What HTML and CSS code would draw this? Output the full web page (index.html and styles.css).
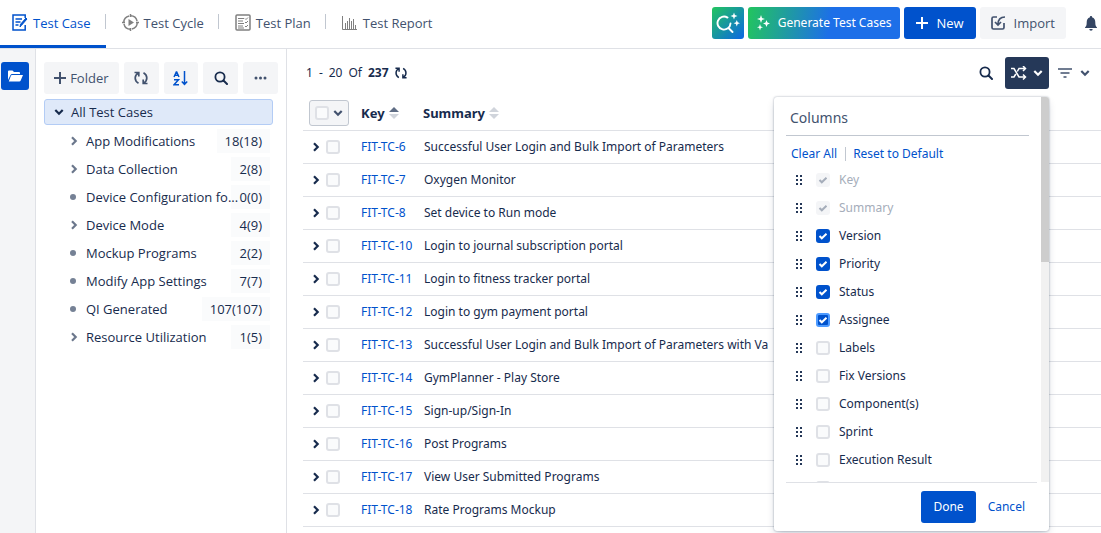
FILE: index.html
```html
<!DOCTYPE html>
<html lang="en">
<head>
    <meta charset="UTF-8">
    <meta name="viewport" content="width=device-width, initial-scale=1.0">
    <title>Test Case</title>
    <link rel="stylesheet" href="styles.css">
</head>
<body>
    <!-- Shared icons -->
    <svg class="sprite" aria-hidden="true">
        <symbol id="i-chevron" viewBox="0 0 10 10"><path d="M1.300 3l3.700 3.700L8.700 3" fill="none" stroke="currentColor" stroke-width="2.200"/></symbol>
        <symbol id="i-right" viewBox="0 0 10 10"><path d="M3 1.300L6.700 5 3 8.700" fill="none" stroke="currentColor" stroke-width="2.200"/></symbol>
        <symbol id="i-plus" viewBox="0 0 12 12"><path d="M6 0v12M0 6h12" stroke="currentColor" stroke-width="2"/></symbol>
        <symbol id="i-search" viewBox="0 0 14 14"><circle cx="6" cy="6" r="4.600" fill="none" stroke="currentColor" stroke-width="1.800"/><path d="M9.500 9.500L13 13" stroke="currentColor" stroke-width="2" stroke-linecap="round"/></symbol>
        <symbol id="i-refresh" viewBox="0 0 14 14"><path d="M4.500 12.300C2.300 11 1.200 9.200 1.200 7S2.300 3 4.500 1.900M.5 1.500h4.300v4M9.500 1.700c2.200 1.300 3.300 3.100 3.300 5.300s-1.100 4-3.300 5.100M13.500 12.500H9.200v-4" fill="none" stroke="currentColor" stroke-width="1.700"/></symbol>
        <symbol id="i-sort" viewBox="0 0 10 12"><path class="sort-up" d="M5 0l5 5H0z"/><path class="sort-down" d="M0 7h10l-5 5z"/></symbol>
        <symbol id="i-drag" viewBox="0 0 7 10"><path d="M0 0h2v2H0zM4 0h2v2H4zM0 4h2v2H0zM4 4h2v2H4zM0 8h2v2H0zM4 8h2v2H4z" fill="currentColor"/></symbol>
    </svg>

    <header class="topbar">
        <nav class="tabs">
            <a href="#" class="tab active">
                <svg width="16" height="17" viewBox="0 0 16 17" fill="none" stroke="currentColor" stroke-width="1.500"><path d="M13.200 4V1H1v15h12.200v-5M3.500 5h6.500M3.500 8h5M3.500 11h3"/><path d="M15 5l-5.500 6.300L8 13l.5-2.700L14 4z" fill="currentColor" stroke-width="1"/></svg>
                Test Case
            </a>
            <a href="#" class="tab">
                <svg class="grey" width="17" height="17" viewBox="0 0 17 17" fill="none" stroke="currentColor"><circle cx="8.500" cy="8.500" r="6.700" stroke-width="1.500" stroke-dasharray="9 1.500"/><path d="M8.500 0v3M8.500 14v3M0 8.500h3M14 8.500h3" stroke-width="1.500"/><path d="M6.500 5l5.500 3.500L6.500 12z" fill="currentColor" stroke="none"/></svg>
                Test Cycle
            </a>
            <a href="#" class="tab">
                <svg class="grey" width="16" height="17" viewBox="0 0 16 17" fill="none" stroke="currentColor"><rect x="1" y="1" width="14" height="15" rx="1" stroke-width="1.500"/><path d="M3 4.500h6M3 7h5M3 9.500h6M3 12h5M3 14h6M10 4.500l1 1 2-2M10 8l1 1 2-2M10 12l1 1 2-2" stroke-width="1"/></svg>
                Test Plan
            </a>
            <a href="#" class="tab">
                <svg class="grey" width="16" height="14" viewBox="0 0 16 14" fill="none" stroke="currentColor"><path d="M.5 0v13.500H15" stroke-width="1"/><path d="M3.500 13V7M5.500 13V5M7.500 13V2M9.500 13V5M11.500 13V3M13.500 13V9" stroke-width="1"/></svg>
                Test Report
            </a>
        </nav>
        <div class="actions">
            <button class="btn ai-search" aria-label="AI search">
                <svg width="24" height="22" viewBox="0 0 24 22" fill="none" stroke="#fff" stroke-width="1.900"><path d="M11.500 5.600A6.500 6.500 0 1 0 14.500 11.500M12.500 16l4 4" stroke-linecap="round"/><path d="M18 .5l.9 2.600 2.600.9-2.600.9L18 7.500l-.9-2.600-2.600-.9 2.600-.9zM20.800 8l.9 2.300 2.300.9-2.300.9-.9 2.300-.9-2.300-2.300-.9 2.300-.9z" fill="#fff" stroke="none"/></svg>
            </button>
            <button class="btn generate">
                <svg width="14" height="16" viewBox="0 0 14 16" fill="#fff"><path d="M5 0l1 3 3 1-3 1-1 3-1-3-3-1 3-1zM10.500 5l1 2.500L14 8.500l-2.500 1-1 2.500-1-2.500L7 8.500l2.500-1zM4 9l.8 2.400L7 12.200l-2.200.8L4 15.500 3.200 13 1 12.200l2.200-.8z"/></svg>
                Generate Test Cases
            </button>
            <button class="btn new"><svg width="12" height="12"><use href="#i-plus"/></svg>New</button>
            <button class="btn import">
                <svg width="15" height="14" viewBox="0 0 15 14" fill="none" stroke="currentColor" stroke-width="1.700"><path d="M6 1H2.500Q1 1 1 2.500v9Q1 13 2.500 13h9q1.500 0 1.500-1.500V7"/><path d="M14 1Q7 1 7 8.500M4 6l3 3 3-3"/></svg>
                Import
            </button>
            <button class="icon-btn bell" aria-label="Notifications">
                <svg width="12" height="15" viewBox="0 0 12 15" fill="currentColor"><path d="M6 0a1 1 0 0 1 1 1.300C9.500 2 10.300 4 10.300 6.500c0 3 .4 3.500 1.700 5V12H0v-.5c1.300-1.500 1.700-2 1.700-5C1.700 4 2.500 2 5 1.300A1 1 0 0 1 6 0zM4.300 13h3.400a1.700 1.700 0 0 1-3.400 0z"/></svg>
            </button>
        </div>
    </header>

    <div class="layout">
        <aside class="rail">
            <button class="rail-btn" aria-label="Folders">
                <svg width="15" height="12" viewBox="0 0 15 12" fill="#fff"><path d="M0 10V1.500Q0 .5 1 .5h3.500L6 2h5q1 0 1 1v1H4Q3 4 2.500 5z"/><path d="M4 5h11l-2.300 5.500q-.4 1-1.400 1H.8L3 5.600Q3.300 5 4 5z"/></svg>
            </button>
        </aside>

        <section class="sidebar">
            <div class="folder-tools">
                <button class="tool tool-folder"><svg width="12" height="12"><use href="#i-plus"/></svg>Folder</button>
                <button class="tool" aria-label="Refresh"><svg width="14" height="14"><use href="#i-refresh"/></svg></button>
                <button class="tool sort" aria-label="Sort">
                    <svg width="16" height="15" viewBox="0 0 16 15" fill="none" stroke="currentColor" stroke-width="1.500"><path d="M1 6l2.300-5h.4L6 6M2 4.300h3M1 8.700h4.500L1 13.800h5M11.500 0v13M8.800 10.500l2.700 3 2.700-3"/></svg>
                </button>
                <button class="tool dark" aria-label="Search folders"><svg width="14" height="14"><use href="#i-search"/></svg></button>
                <button class="tool" aria-label="More">
                    <svg width="13" height="4" viewBox="0 0 13 4" fill="currentColor"><circle cx="2" cy="2" r="1.500"/><circle cx="6.500" cy="2" r="1.500"/><circle cx="11" cy="2" r="1.500"/></svg>
                </button>
            </div>
            <a href="#" class="tree-root"><svg width="10" height="10"><use href="#i-chevron"/></svg>All Test Cases</a>
            <ul class="tree">
                <li><svg width="10" height="10"><use href="#i-right"/></svg><a href="#">App Modifications</a><span class="count">18(18)</span></li>
                <li><svg width="10" height="10"><use href="#i-right"/></svg><a href="#">Data Collection</a><span class="count">2(8)</span></li>
                <li><i class="dot"></i><a href="#">Device Configuration fo...</a><span class="count">0(0)</span></li>
                <li><svg width="10" height="10"><use href="#i-right"/></svg><a href="#">Device Mode</a><span class="count">4(9)</span></li>
                <li><i class="dot"></i><a href="#">Mockup Programs</a><span class="count">2(2)</span></li>
                <li><i class="dot"></i><a href="#">Modify App Settings</a><span class="count">7(7)</span></li>
                <li><i class="dot"></i><a href="#">QI Generated</a><span class="count">107(107)</span></li>
                <li><svg width="10" height="10"><use href="#i-right"/></svg><a href="#">Resource Utilization</a><span class="count">1(5)</span></li>
            </ul>
        </section>

        <main class="content">
            <div class="list-bar">
                <div class="pager">
                    <span>1</span><span>-</span><span>20</span><span>Of</span><b>237</b>
                    <button class="icon-btn" aria-label="Refresh list"><svg width="12" height="12"><use href="#i-refresh"/></svg></button>
                </div>
                <div class="list-tools">
                    <button class="icon-btn" aria-label="Search"><svg width="14" height="14"><use href="#i-search"/></svg></button>
                    <div class="columns-menu">
                        <button class="columns-btn" aria-label="Columns">
                            <svg width="16" height="14" viewBox="0 0 16 14" fill="none" stroke="currentColor" stroke-width="1.500"><path d="M0 2.500h3L8 11h6M0 11h3l1.800-3M6.300 5.500L8 2.500h6M12 0l2.500 2.500L12 5M12 8.500l2.500 2.500-2.500 2.500"/></svg>
                            <svg width="10" height="10"><use href="#i-chevron"/></svg>
                        </button>
                        <div class="popup">
                            <div class="popup-body">
                                <div class="popup-scroll">
                                    <h2>Columns</h2>
                                    <div class="popup-links"><a href="#">Clear All</a><a href="#">Reset to Default</a></div>
                                    <ul class="column-list">
                                        <li><svg width="7" height="10"><use href="#i-drag"/></svg><label><input type="checkbox" checked disabled>Key</label></li>
                                        <li><svg width="7" height="10"><use href="#i-drag"/></svg><label><input type="checkbox" checked disabled>Summary</label></li>
                                        <li><svg width="7" height="10"><use href="#i-drag"/></svg><label><input type="checkbox" checked>Version</label></li>
                                        <li><svg width="7" height="10"><use href="#i-drag"/></svg><label><input type="checkbox" checked>Priority</label></li>
                                        <li><svg width="7" height="10"><use href="#i-drag"/></svg><label><input type="checkbox" checked>Status</label></li>
                                        <li><svg width="7" height="10"><use href="#i-drag"/></svg><label><input type="checkbox" class="focused" checked>Assignee</label></li>
                                        <li><svg width="7" height="10"><use href="#i-drag"/></svg><label><input type="checkbox">Labels</label></li>
                                        <li><svg width="7" height="10"><use href="#i-drag"/></svg><label><input type="checkbox">Fix Versions</label></li>
                                        <li><svg width="7" height="10"><use href="#i-drag"/></svg><label><input type="checkbox">Component(s)</label></li>
                                        <li><svg width="7" height="10"><use href="#i-drag"/></svg><label><input type="checkbox">Sprint</label></li>
                                        <li><svg width="7" height="10"><use href="#i-drag"/></svg><label><input type="checkbox">Execution Result</label></li>
                                        <li><svg width="7" height="10"><use href="#i-drag"/></svg><label><input type="checkbox" aria-label="Column"></label></li>
                                    </ul>
                                </div>
                                <div class="scrollbar"><div class="thumb"></div></div>
                            </div>
                            <div class="popup-footer">
                                <button class="done">Done</button>
                                <button class="cancel">Cancel</button>
                            </div>
                        </div>
                    </div>
                    <button class="icon-btn filter" aria-label="Filter">
                        <svg width="14" height="10" viewBox="0 0 14 10" stroke="currentColor" stroke-width="1.700"><path d="M0 1h14M2.500 5h9M5.500 9h3"/></svg>
                        <svg width="10" height="10"><use href="#i-chevron"/></svg>
                    </button>
                </div>
            </div>

            <table class="cases">
                <thead>
                    <tr>
                        <th class="col-select"><div class="select-all"><input type="checkbox" aria-label="Select all"><svg width="10" height="10"><use href="#i-chevron"/></svg></div></th>
                        <th class="col-key"><span class="sorted">Key<svg width="10" height="12"><use href="#i-sort"/></svg></span></th>
                        <th><span>Summary<svg width="10" height="12"><use href="#i-sort"/></svg></span></th>
                    </tr>
                </thead>
                <tbody>
                    <tr><td><div class="row-tools"><svg width="10" height="10"><use href="#i-right"/></svg><input type="checkbox" aria-label="FIT-TC-6"></div></td><td><a href="#">FIT-TC-6</a></td><td>Successful User Login and Bulk Import of Parameters</td></tr>
                    <tr><td><div class="row-tools"><svg width="10" height="10"><use href="#i-right"/></svg><input type="checkbox" aria-label="FIT-TC-7"></div></td><td><a href="#">FIT-TC-7</a></td><td>Oxygen Monitor</td></tr>
                    <tr><td><div class="row-tools"><svg width="10" height="10"><use href="#i-right"/></svg><input type="checkbox" aria-label="FIT-TC-8"></div></td><td><a href="#">FIT-TC-8</a></td><td>Set device to Run mode</td></tr>
                    <tr><td><div class="row-tools"><svg width="10" height="10"><use href="#i-right"/></svg><input type="checkbox" aria-label="FIT-TC-10"></div></td><td><a href="#">FIT-TC-10</a></td><td>Login to journal subscription portal</td></tr>
                    <tr><td><div class="row-tools"><svg width="10" height="10"><use href="#i-right"/></svg><input type="checkbox" aria-label="FIT-TC-11"></div></td><td><a href="#">FIT-TC-11</a></td><td>Login to fitness tracker portal</td></tr>
                    <tr><td><div class="row-tools"><svg width="10" height="10"><use href="#i-right"/></svg><input type="checkbox" aria-label="FIT-TC-12"></div></td><td><a href="#">FIT-TC-12</a></td><td>Login to gym payment portal</td></tr>
                    <tr><td><div class="row-tools"><svg width="10" height="10"><use href="#i-right"/></svg><input type="checkbox" aria-label="FIT-TC-13"></div></td><td><a href="#">FIT-TC-13</a></td><td>Successful User Login and Bulk Import of Parameters with Va</td></tr>
                    <tr><td><div class="row-tools"><svg width="10" height="10"><use href="#i-right"/></svg><input type="checkbox" aria-label="FIT-TC-14"></div></td><td><a href="#">FIT-TC-14</a></td><td>GymPlanner - Play Store</td></tr>
                    <tr><td><div class="row-tools"><svg width="10" height="10"><use href="#i-right"/></svg><input type="checkbox" aria-label="FIT-TC-15"></div></td><td><a href="#">FIT-TC-15</a></td><td>Sign-up/Sign-In</td></tr>
                    <tr><td><div class="row-tools"><svg width="10" height="10"><use href="#i-right"/></svg><input type="checkbox" aria-label="FIT-TC-16"></div></td><td><a href="#">FIT-TC-16</a></td><td>Post Programs</td></tr>
                    <tr><td><div class="row-tools"><svg width="10" height="10"><use href="#i-right"/></svg><input type="checkbox" aria-label="FIT-TC-17"></div></td><td><a href="#">FIT-TC-17</a></td><td>View User Submitted Programs</td></tr>
                    <tr><td><div class="row-tools"><svg width="10" height="10"><use href="#i-right"/></svg><input type="checkbox" aria-label="FIT-TC-18"></div></td><td><a href="#">FIT-TC-18</a></td><td>Rate Programs Mockup</td></tr>
                </tbody>
            </table>
        </main>
    </div>
</body>
</html>
```
FILE: styles.css
```css
* {
    margin: 0;
    padding: 0;
    box-sizing: border-box;
}

body {
    font-family: "Open Sans", "Noto Sans", sans-serif;
    font-size: 13px;
    line-height: 20px;
    color: #172b4d;
    background: #fff;
    height: 100vh;
    display: flex;
    flex-direction: column;
    overflow: hidden;
}

a {
    color: #0052cc;
    text-decoration: none;
}

button {
    font: inherit;
    color: inherit;
    border: none;
    background: none;
    cursor: pointer;
}

svg {
    display: block;
    flex-shrink: 0;
}

ul {
    list-style: none;
}

.sprite {
    position: absolute;
    width: 0;
    height: 0;
}

/* Checkboxes */
input[type="checkbox"] {
    appearance: none;
    width: 14px;
    height: 14px;
    flex-shrink: 0;
    border: 2px solid #dfe1e6;
    border-radius: 3px;
    background: #fafbfc;
}

input[type="checkbox"]:checked {
    border-color: #0052cc;
    background: #0052cc url("data:image/svg+xml,%3Csvg xmlns='http://www.w3.org/2000/svg' viewBox='0 0 10 10'%3E%3Cpath d='M1.500 5l2.300 2.300L8.500 2.800' fill='none' stroke='white' stroke-width='2'/%3E%3C/svg%3E") center / 10px no-repeat;
}

input[type="checkbox"].focused {
    border-color: #4c9aff;
}

input[type="checkbox"]:disabled {
    border-color: #f4f5f7;
    background: #f4f5f7 url("data:image/svg+xml,%3Csvg xmlns='http://www.w3.org/2000/svg' viewBox='0 0 10 10'%3E%3Cpath d='M1.500 5l2.300 2.300L8.500 2.800' fill='none' stroke='%23a5adba' stroke-width='2'/%3E%3C/svg%3E") center / 10px no-repeat;
}

/* Top bar */
.topbar {
    display: flex;
    justify-content: space-between;
    height: 49px;
    flex-shrink: 0;
    border-bottom: 1px solid #dfe1e6;
}

.tabs {
    display: flex;
}

.tab {
    display: flex;
    align-items: center;
    gap: 5px;
    padding: 0 15px 0 16px;
    color: #42526e;
    border-bottom: 3px solid transparent;
    background: linear-gradient(#c1c7d0, #c1c7d0) right 14px / 1px 15px no-repeat;
}

.tab:first-child {
    padding-left: 12px;
}

.tab:last-child {
    background: none;
}

.tab.active {
    color: #0052cc;
    border-bottom-color: #0052cc;
}

.grey {
    color: #808080;
}

.actions {
    display: flex;
    align-items: center;
    gap: 4px;
    padding: 0 4px 2px 0;
}

.btn {
    display: flex;
    align-items: center;
    height: 32px;
    padding: 0 12px;
    border-radius: 3px;
    color: #fff;
}

.ai-search {
    justify-content: center;
    width: 32px;
    padding: 0;
    background: linear-gradient(135deg, #22c55e, #0c66e4);
}

.generate {
    gap: 8px;
    padding: 0 9px 0 8px;
    background: linear-gradient(100deg, #22c55e, #1d6fe8 54%);
    font-family: "Noto Sans", sans-serif;
    font-size: 12px;
}

.new {
    gap: 8px;
    background: #0052cc;
}

.import {
    gap: 8px;
    padding: 0 11px;
    background: #f4f5f7;
    color: #42526e;
}

.icon-btn {
    display: flex;
    align-items: center;
}

.bell {
    padding-left: 15px;
    color: #344563;
}

/* Page areas */
.layout {
    display: flex;
    flex: 1;
    min-height: 0;
}

.rail {
    width: 36px;
    flex-shrink: 0;
    padding: 13px 1px;
    background: #f4f5f7;
    border-right: 1px solid #dfe1e6;
}

.rail-btn {
    display: flex;
    align-items: center;
    justify-content: center;
    width: 28px;
    height: 28px;
    border-radius: 3px;
    background: #0052cc;
}

.sidebar {
    width: 251px;
    flex-shrink: 0;
    padding: 13px 8px;
    border-right: 1px solid #dfe1e6;
}

.folder-tools {
    display: flex;
    gap: 5px;
    margin-bottom: 5px;
}

.tool {
    display: flex;
    align-items: center;
    justify-content: center;
    gap: 4px;
    width: 35px;
    height: 32px;
    border-radius: 3px;
    background: #f4f5f7;
    color: #42526e;
}

.tool-folder {
    width: 75px;
}

.sort {
    color: #0052cc;
}

.dark {
    color: #172b4d;
}

.tree-root {
    display: flex;
    align-items: center;
    gap: 7px;
    height: 26px;
    margin: 0 5px 4px 0;
    padding: 0 9px;
    border: 1px solid #b3ccf5;
    border-radius: 3px;
    background: #dfe9f9;
    color: #172b4d;
}

.tree {
    display: flex;
    flex-direction: column;
    gap: 4px;
    padding: 0 8px 0 25px;
}

.tree li {
    display: flex;
    align-items: center;
    height: 24px;
}

.tree svg {
    margin-right: 7px;
    color: #6b778c;
}

.dot {
    width: 6px;
    height: 6px;
    margin: 0 10px 0 1px;
    border-radius: 50%;
    background: #758195;
    flex-shrink: 0;
}

.tree a {
    flex: 1;
    min-width: 0;
    z-index: 1;
    color: #172b4d;
    white-space: nowrap;
}

.count {
    flex-shrink: 0;
    padding: 2px 8px;
    background: #fafbfc;
}

/* Test case list */
.content {
    flex: 1;
    min-width: 0;
    padding-left: 16px;
    font-family: "Noto Sans", sans-serif;
    font-size: 12px;
}

.list-bar {
    display: flex;
    align-items: center;
    justify-content: space-between;
    height: 48px;
    padding: 0 11px 0 3px;
}

.pager {
    display: flex;
    gap: 6px;
}

.list-tools {
    display: flex;
    align-items: center;
}

.columns-menu {
    position: relative;
    margin: 0 9px 0 12px;
}

.columns-btn {
    display: flex;
    align-items: center;
    justify-content: center;
    gap: 6px;
    width: 44px;
    height: 32px;
    border-radius: 3px;
    background: #253858;
    color: #fff;
}

.filter {
    gap: 8px;
    color: #42526e;
}

.cases {
    width: 100%;
    border-collapse: collapse;
    table-layout: fixed;
}

.cases tr {
    height: 33px;
    border-bottom: 1px solid #dfe1e6;
}

.cases th,
.cases td {
    text-align: left;
    white-space: nowrap;
}

.cases th {
    font-size: 13px;
}

.cases th span {
    display: flex;
    align-items: center;
    gap: 4px;
}

.cases td:last-child {
    padding-left: 1px;
}

.col-select {
    width: 58px;
}

.col-key {
    width: 62px;
}

.select-all {
    display: flex;
    align-items: center;
    gap: 4px;
    width: 40px;
    height: 26px;
    margin-left: 6px;
    padding-left: 5px;
    border: 1px solid #c1c7d0;
    border-radius: 3px;
    background: #f4f5f7;
    color: #42526e;
}

.row-tools {
    display: flex;
    align-items: center;
    gap: 5px;
    padding-left: 8px;
}

.sort-up {
    fill: var(--sort-up, #d0d4db);
}

.sort-down {
    fill: #d0d4db;
}

.sorted {
    --sort-up: #5e6c84;
}

/* Columns popup */
.popup {
    position: absolute;
    top: 40px;
    right: 0;
    width: 275px;
    border-radius: 3px;
    background: #fff;
    box-shadow: 0 4px 8px -2px rgba(9, 30, 66, 0.25), 0 0 2px rgba(9, 30, 66, 0.4);
    overflow: hidden;
}

.popup-body {
    display: flex;
    height: 385px;
}

.popup-scroll {
    flex: 1;
    overflow: hidden;
    padding: 4px 12px 0;
}

.popup h2 {
    padding: 7px 4px;
    margin-bottom: 8px;
    border-bottom: 1px solid #c1c7d0;
    font-size: 14px;
    font-weight: 400;
    color: #42526e;
}

.popup-links {
    display: flex;
    align-items: center;
    padding-left: 5px;
    margin-bottom: 2px;
}

.popup-links a + a {
    margin-left: 8px;
    padding-left: 8px;
    background: linear-gradient(#c1c7d0, #c1c7d0) left / 1px 14px no-repeat;
}

.column-list li {
    display: flex;
    align-items: center;
    gap: 13px;
    height: 28px;
    padding-left: 10px;
    color: #253858;
}

.column-list label {
    display: flex;
    align-items: center;
    gap: 9px;
    color: #172b4d;
}

.column-list label:has(:disabled) {
    color: #a5adba;
}

.scrollbar {
    width: 8px;
    background: #f1f1f1;
}

.thumb {
    height: 165px;
    background: #cdcdcd;
}

.popup-footer {
    display: flex;
    justify-content: flex-end;
    margin: 0 12px;
    padding: 8px 0;
    border-top: 1px solid #dfe1e6;
}

.done,
.cancel {
    height: 32px;
    padding: 0 12px;
    border-radius: 3px;
    color: #0052cc;
}

.done {
    background: #0052cc;
    color: #fff;
}
```
